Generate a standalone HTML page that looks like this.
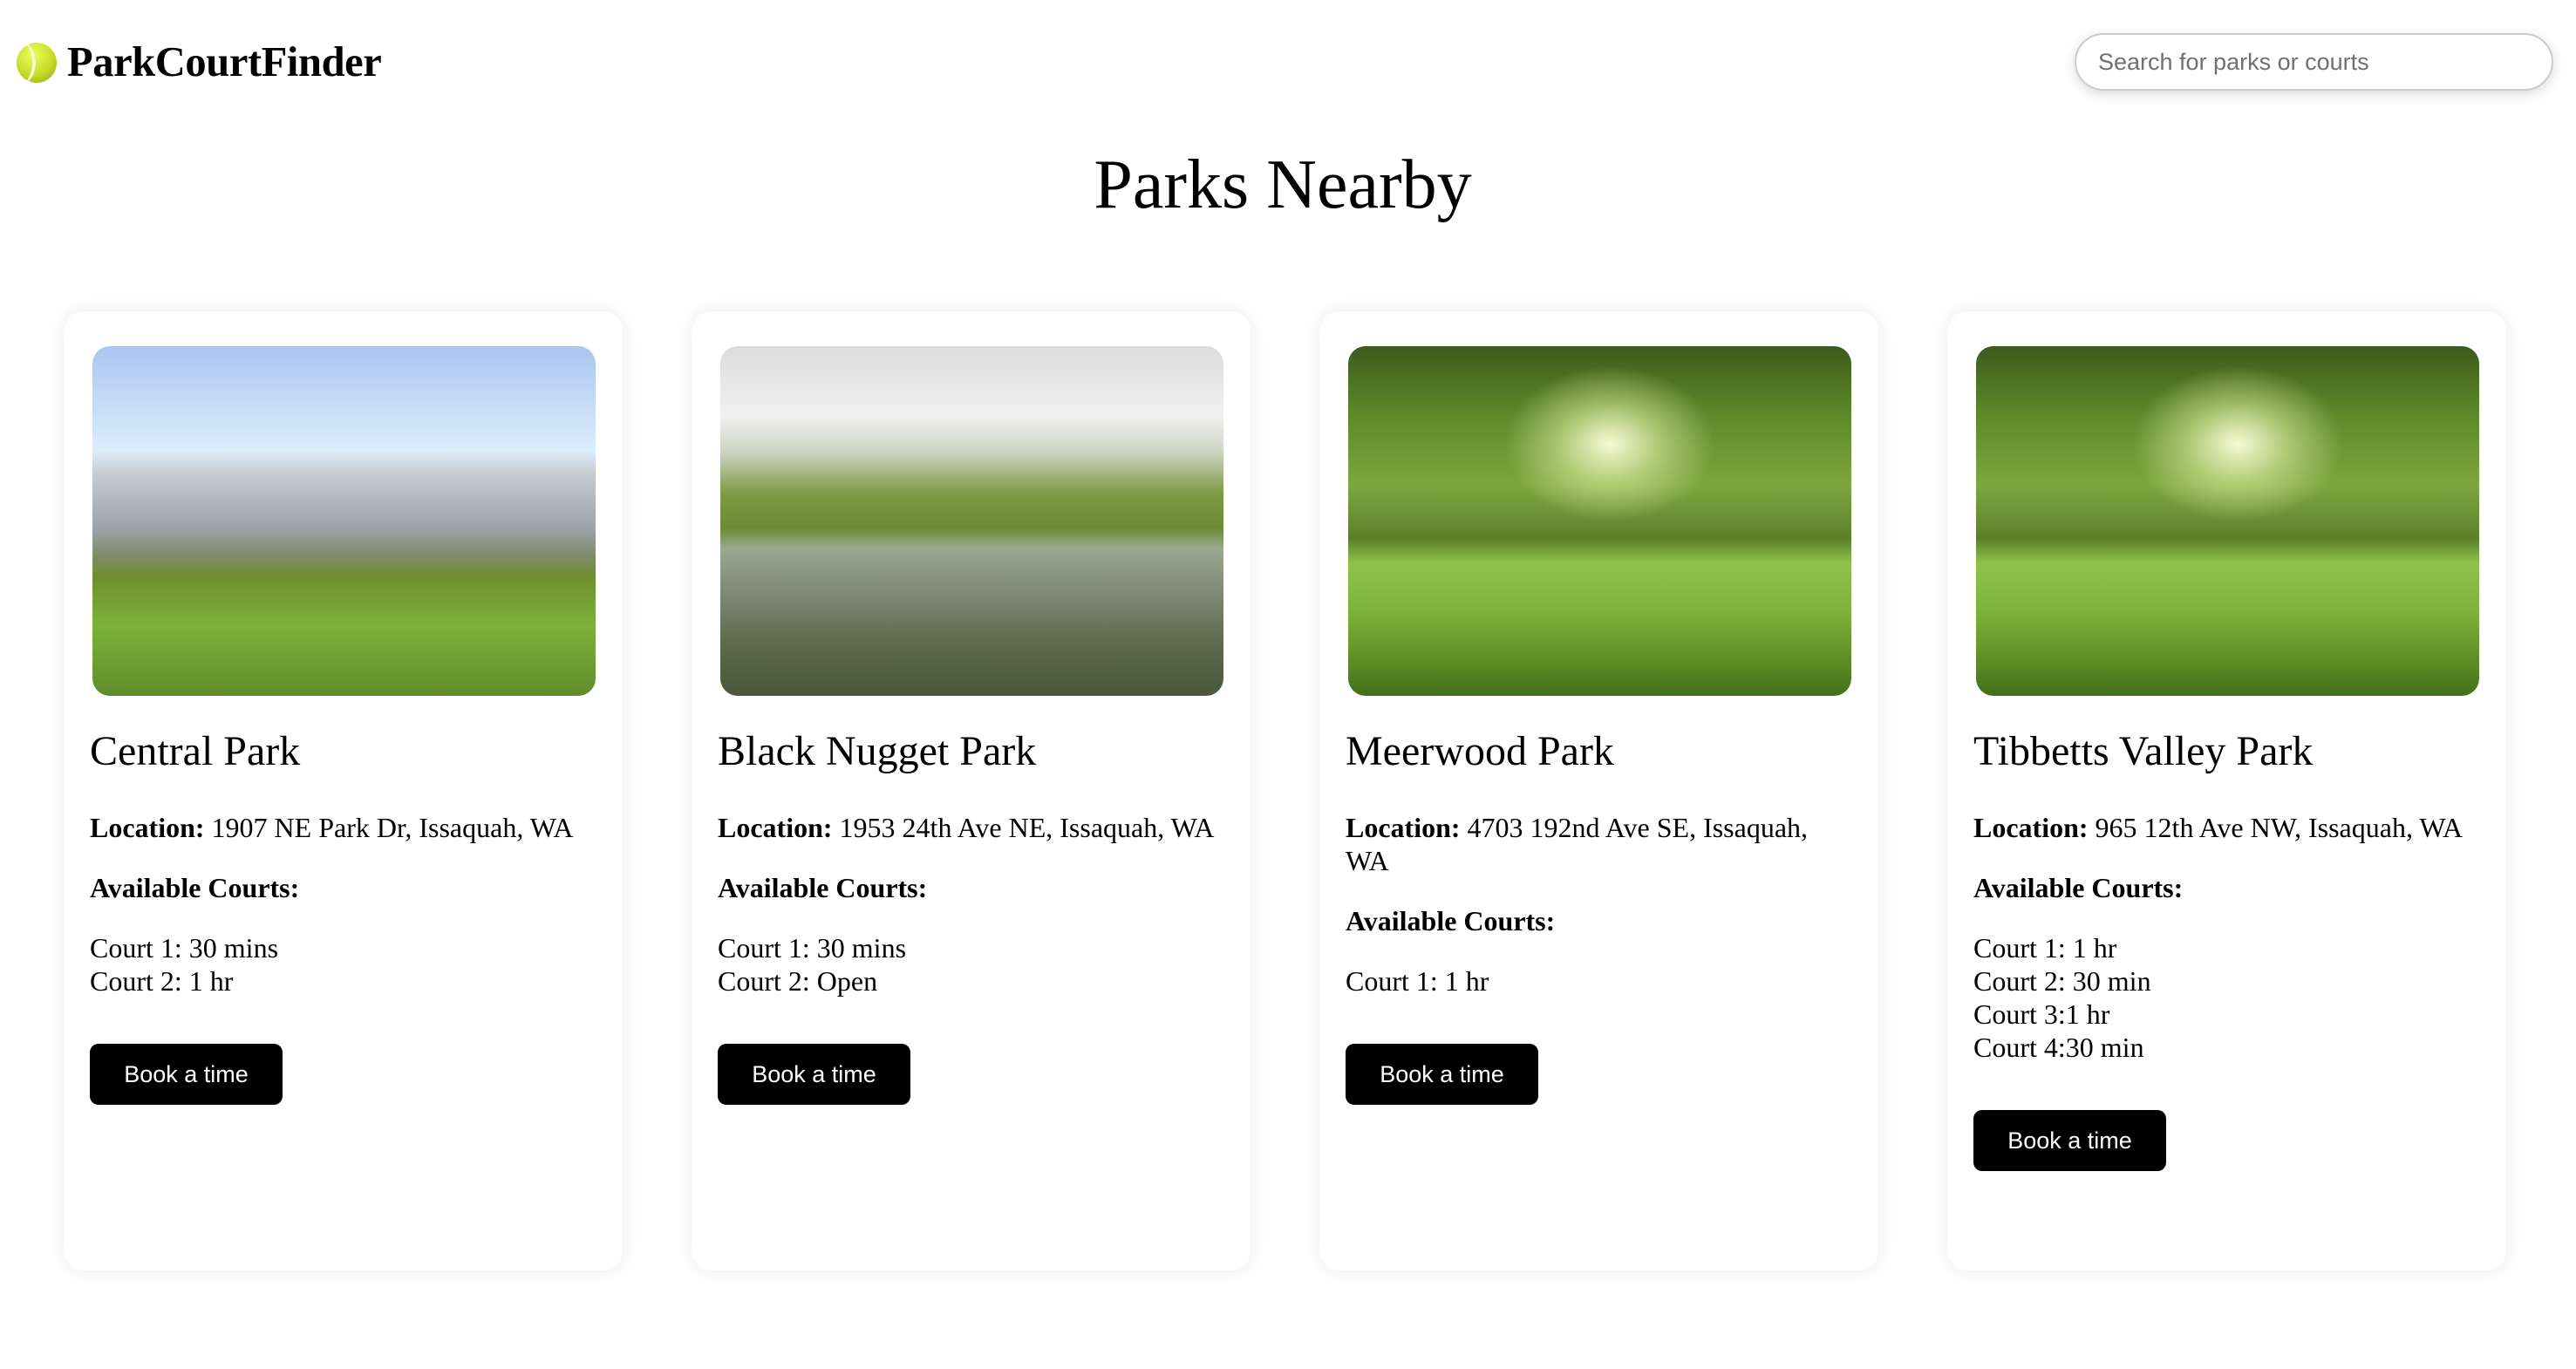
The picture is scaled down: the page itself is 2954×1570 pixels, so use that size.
<!DOCTYPE html>
<html><head><meta charset="utf-8"><style>
*{margin:0;padding:0;box-sizing:border-box}
body{width:2954px;height:1570px;background:#fff;font-family:"Liberation Serif",serif;color:#000;position:relative;overflow:hidden}
.logo{position:absolute;left:19px;top:44px;display:flex;align-items:center}
.ball{width:46px;height:46px;border-radius:50%;background:radial-gradient(circle at 40% 30%,#eaff5a,#c6dc2a 55%,#8ea515);position:relative;overflow:hidden;margin-right:12px}
.ball:before{content:"";position:absolute;left:-22px;top:-4px;width:40px;height:54px;border-radius:50%;border-right:4px solid #f4f7d8}
.logo span{font-weight:bold;font-size:48.5px;letter-spacing:-0.4px}
.search{position:absolute;left:2379px;top:38px;width:549px;height:66px;border:2px solid #ccc;border-radius:33px;box-shadow:0 4px 14px rgba(0,0,0,.15);font-family:"Liberation Sans",sans-serif;font-size:27px;color:#707070;padding-left:25px;line-height:62px}
h1{position:absolute;left:-6px;width:2954px;text-align:center;top:164px;font-weight:normal;font-size:80px;line-height:96px}
.card{position:absolute;top:357px;width:640px;height:1100px;border-radius:22px;background:#fff;box-shadow:0 0 24px rgba(0,0,0,.08);padding:40px 29px 0 29px}
.img{width:577px;height:401px;border-radius:20px;margin-left:3px;overflow:hidden;position:relative}
h2{font-weight:normal;font-size:48px;line-height:56px;margin-top:36px}
p{font-size:32px;line-height:38px;margin-top:31px}
p.first{margin-top:40px}
.btn{display:inline-block;margin-top:53px;width:221px;height:70px;background:#000;color:#fff;border-radius:10px;font-family:"Liberation Sans",sans-serif;font-size:27px;text-align:center;line-height:70px}
.park{background:linear-gradient(180deg,#aac6f0 0%,#dcedfb 30%,#c8ccd3 36%,#9ea3ab 52%,#7f8a6a 60%,#6f8f2f 66%,#7bb23a 80%,#5f8c2a 100%)}
.nug{background:linear-gradient(180deg,#dcdcdc 0%,#f0f0f0 20%,#cfd5c5 30%,#7f9a45 42%,#6a8c35 52%,#9aa990 58%,#7f8a78 70%,#5d6a4c 85%,#49573a 100%)}
.mw{background:radial-gradient(ellipse 120px 90px at 52% 28%,rgba(255,255,220,.95),rgba(230,245,170,.5) 50%,transparent 100%),linear-gradient(180deg,#3c5a1c 0%,#5f8a2a 20%,#7da640 40%,#5c7f2a 55%,#8ec24a 62%,#7fb43c 75%,#5d8e26 90%,#41701a 100%)}
</style></head><body>
<div class="logo"><div class="ball"></div><span>ParkCourtFinder</span></div>
<div class="search">Search for parks or courts</div>
<h1>Parks Nearby</h1>

<div class="card" style="left:74px">
<div class="img park"></div>
<h2>Central Park</h2>
<p class="first"><b>Location:</b> 1907 NE Park Dr, Issaquah, WA</p>
<p><b>Available Courts:</b></p>
<p>Court 1: 30 mins<br>Court 2: 1 hr</p>
<div class="btn">Book a time</div>
</div>

<div class="card" style="left:794px">
<div class="img nug"></div>
<h2>Black Nugget Park</h2>
<p class="first"><b>Location:</b> 1953 24th Ave NE, Issaquah, WA</p>
<p><b>Available Courts:</b></p>
<p>Court 1: 30 mins<br>Court 2: Open</p>
<div class="btn">Book a time</div>
</div>

<div class="card" style="left:1514px">
<div class="img mw"></div>
<h2>Meerwood Park</h2>
<p class="first"><b>Location:</b> 4703 192nd Ave SE, Issaquah, WA</p>
<p><b>Available Courts:</b></p>
<p>Court 1: 1 hr</p>
<div class="btn">Book a time</div>
</div>

<div class="card" style="left:2234px">
<div class="img mw"></div>
<h2>Tibbetts Valley Park</h2>
<p class="first"><b>Location:</b> 965 12th Ave NW, Issaquah, WA</p>
<p><b>Available Courts:</b></p>
<p>Court 1: 1 hr<br>Court 2: 30 min<br>Court 3:1 hr<br>Court 4:30 min</p>
<div class="btn">Book a time</div>
</div>
</body></html>
